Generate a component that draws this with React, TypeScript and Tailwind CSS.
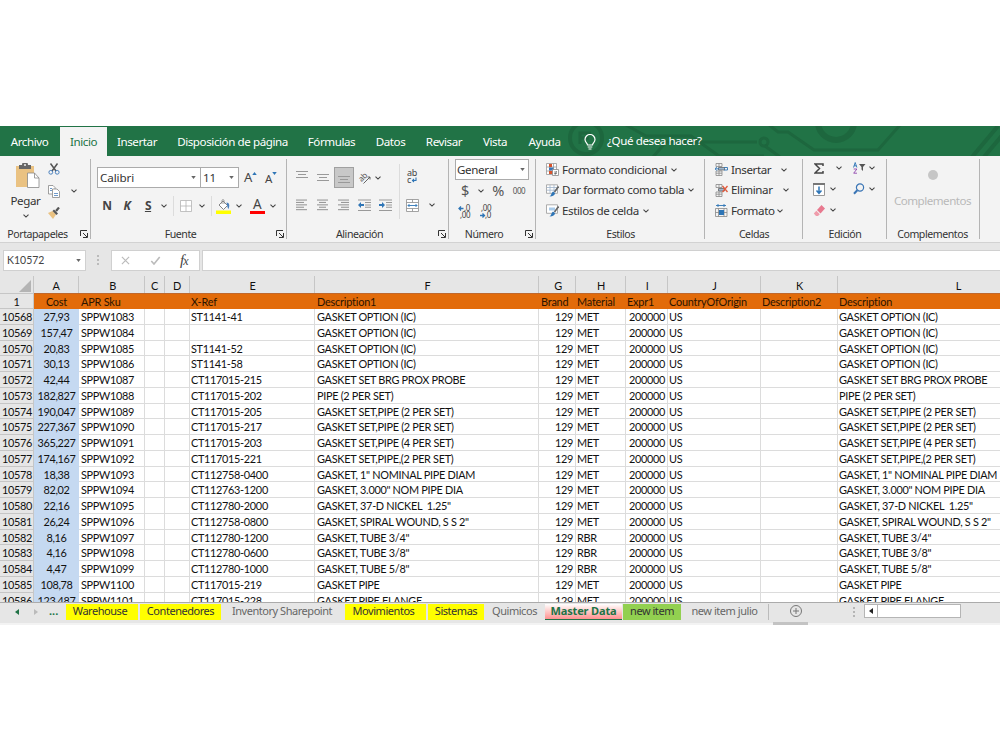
import React from 'react';
import clsx from 'clsx';

interface Row {
  id: string;
  cost: string;
  sku: string;
  xref: string;
  desc: string;
  material: string;
}

const ROWS: Row[] = [
  { id: '10568', cost: '27,93', sku: 'SPPW1083', xref: 'ST1141-41', desc: 'GASKET OPTION (IC)', material: 'MET' },
  { id: '10569', cost: '157,47', sku: 'SPPW1084', xref: '', desc: 'GASKET OPTION (IC)', material: 'MET' },
  { id: '10570', cost: '20,83', sku: 'SPPW1085', xref: 'ST1141-52', desc: 'GASKET OPTION (IC)', material: 'MET' },
  { id: '10571', cost: '30,13', sku: 'SPPW1086', xref: 'ST1141-58', desc: 'GASKET OPTION (IC)', material: 'MET' },
  { id: '10572', cost: '42,44', sku: 'SPPW1087', xref: 'CT117015-215', desc: 'GASKET SET BRG PROX PROBE', material: 'MET' },
  { id: '10573', cost: '182,827', sku: 'SPPW1088', xref: 'CT117015-202', desc: 'PIPE (2 PER SET)', material: 'MET' },
  { id: '10574', cost: '190,047', sku: 'SPPW1089', xref: 'CT117015-205', desc: 'GASKET SET,PIPE (2 PER SET)', material: 'MET' },
  { id: '10575', cost: '227,367', sku: 'SPPW1090', xref: 'CT117015-217', desc: 'GASKET SET,PIPE (2 PER SET)', material: 'MET' },
  { id: '10576', cost: '365,227', sku: 'SPPW1091', xref: 'CT117015-203', desc: 'GASKET SET,PIPE (4 PER SET)', material: 'MET' },
  { id: '10577', cost: '174,167', sku: 'SPPW1092', xref: 'CT117015-221', desc: 'GASKET SET,PIPE,(2 PER SET)', material: 'MET' },
  { id: '10578', cost: '18,38', sku: 'SPPW1093', xref: 'CT112758-0400', desc: 'GASKET, 1" NOMINAL PIPE DIAM', material: 'MET' },
  { id: '10579', cost: '82,02', sku: 'SPPW1094', xref: 'CT112763-1200', desc: 'GASKET, 3.000" NOM PIPE DIA', material: 'MET' },
  { id: '10580', cost: '22,16', sku: 'SPPW1095', xref: 'CT112780-2000', desc: 'GASKET, 37-D NICKEL  1.25"', material: 'MET' },
  { id: '10581', cost: '26,24', sku: 'SPPW1096', xref: 'CT112758-0800', desc: 'GASKET, SPIRAL WOUND, S S 2"', material: 'MET' },
  { id: '10582', cost: '8,16', sku: 'SPPW1097', xref: 'CT112780-1200', desc: 'GASKET, TUBE 3/4"', material: 'RBR' },
  { id: '10583', cost: '4,16', sku: 'SPPW1098', xref: 'CT112780-0600', desc: 'GASKET, TUBE 3/8"', material: 'RBR' },
  { id: '10584', cost: '4,47', sku: 'SPPW1099', xref: 'CT112780-1000', desc: 'GASKET, TUBE 5/8"', material: 'RBR' },
  { id: '10585', cost: '108,78', sku: 'SPPW1100', xref: 'CT117015-219', desc: 'GASKET PIPE', material: 'MET' },
  { id: '10586', cost: '123,487', sku: 'SPPW1101', xref: 'CT117015-228', desc: 'GASKET PIPE FLANGE', material: 'MET' },
];

const COLS = [
  { letter: 'A', title: 'Cost', w: 'w-[45px]' },
  { letter: 'B', title: 'APR Sku', w: 'w-[66px] pl-0.5' },
  { letter: 'C', title: '', w: 'w-[20px]' },
  { letter: 'D', title: '', w: 'w-[25px]' },
  { letter: 'E', title: 'X-Ref', w: 'w-[125px] pl-px' },
  { letter: 'F', title: 'Description1', w: 'w-[224px] pl-0.5' },
  { letter: 'G', title: 'Brand', w: 'w-[37px] pl-0.5' },
  { letter: 'H', title: 'Material', w: 'w-[50px] pl-px' },
  { letter: 'I', title: 'Expr1', w: 'w-[42px] pl-px' },
  { letter: 'J', title: 'CountryOfOrigin', w: 'w-[93px] pl-px' },
  { letter: 'K', title: 'Description2', w: 'w-[77px] pl-px' },
  { letter: 'L', title: 'Description', w: 'w-[241px] pl-px' },
];

const GRID_FONT = "font-['Lato',sans-serif] text-[10.9px] tracking-[-0.31px] whitespace-pre";

/* ---------- shared pieces ---------- */

function Chevron({ className }: { className?: string }) {
  return (
    <svg viewBox="0 0 6 4" className={clsx('h-1 w-1.5 shrink-0', className)} fill="none" stroke="#444" strokeWidth="1.1">
      <path d="M.5.7 3 3.1 5.5.7" />
    </svg>
  );
}

function Caret({ className }: { className?: string }) {
  return (
    <svg viewBox="0 0 6 4" className={clsx('h-[3px] w-[5px] shrink-0', className)} fill="#666">
      <path d="M0 0h6L3 4z" />
    </svg>
  );
}

function Slot({ className, children }: { className?: string; children: React.ReactNode }) {
  return <div className={clsx('flex h-5 w-5 shrink-0 items-center justify-center', className)}>{children}</div>;
}

function Launcher() {
  return (
    <svg viewBox="0 0 8 8" className="absolute right-[3px] bottom-1 h-2 w-2" fill="none" stroke="#333">
      <path d="M.5 6V.5H7M3 3l4 4M7.5 3v4.500H3" />
    </svg>
  );
}

function Group({ w, label, labelClass, launcher, children }: {
  w: string;
  label: string;
  labelClass?: string;
  launcher?: boolean;
  children: React.ReactNode;
}) {
  return (
    <section className={clsx('relative flex shrink-0 flex-col', w)}>
      <div className="h-[71px]">{children}</div>
      <div className={clsx('pt-px text-center text-[10.6px] leading-4 tracking-[-0.45px] whitespace-nowrap text-[#333]', labelClass)}>{label}</div>
      {launcher && <Launcher />}
      <div className="absolute top-[3px] right-0 h-[80px] w-px bg-[#b4b4b4]" />
    </section>
  );
}

/* ---------- icons ---------- */

function PasteIcon() {
  return (
    <svg viewBox="0 0 24 26" className="h-[26px] w-6">
      <path d="M0 3h18v21H0z" fill="#eac282" />
      <path d="M3 2h3a3 3 0 0 1 6 0h3v4H3z" fill="#666" />
      <circle cx="9" cy="2" r="1" fill="#eee" />
      <path d="M11.500 10h7l4.500 5v9.500H11.500z" fill="#fff" stroke="#888" strokeWidth=".8" />
      <path d="M18.500 10v5H23" fill="none" stroke="#888" strokeWidth=".8" />
    </svg>
  );
}

function CutIcon() {
  return (
    <svg viewBox="0 0 12 12" className="h-3 w-3" fill="none">
      <path d="M2.500.5 8 8M9.500.5 4 8" stroke="#555" strokeWidth="1.500" />
      <circle cx="2.800" cy="9.300" r="1.900" stroke="#4a80bd" />
      <circle cx="9.200" cy="9.300" r="1.900" stroke="#4a80bd" />
    </svg>
  );
}

function CopyIcon() {
  return (
    <svg viewBox="0 0 12 13" className="h-[13px] w-3" fill="#fff" stroke="#888" strokeWidth=".8">
      <path d="M.5.500h4.500l2 2v6.500H.5z" />
      <path d="M4.500 4h4.500l2.500 2.500v6h-7z" />
      <path d="M2 3.500h2M2 5.500h2M6 8.500h4M6 10.500h4" stroke="#4a80bd" />
    </svg>
  );
}

function BrushIcon() {
  return (
    <svg viewBox="0 0 12 12" className="h-3 w-3">
      <path d="M0 6 4.500 4l3.500 3.500L5 12z" fill="#eac282" />
      <path d="m4.500 4 1.500-1.500 4 4L8.500 8z" fill="#555" />
      <path d="m8 4 3-3.500" stroke="#555" strokeWidth="2.200" />
    </svg>
  );
}

function BordersIcon() {
  return (
    <svg viewBox="0 0 12 12" className="h-3 w-3" fill="#fff" stroke="#b4b4b4" strokeWidth=".8">
      <path d="M.5.500h11v11H.5zM6 .5v11M.5 6h11" />
    </svg>
  );
}

function BucketIcon() {
  return (
    <svg viewBox="0 0 15 15" className="h-[15px] w-[15px]" fill="none">
      <path d="m3 6 4-4 4.500 4.500-4 4z" fill="#fff" stroke="#777" strokeWidth=".9" />
      <path d="M6 5V1.500C6 .3 8 .3 8 1.500V5" stroke="#888" strokeWidth=".8" />
      <path d="M10.500 3.500c3 0 3.500 3 2 6.500-1-1-1.500-4-2-6.500z" fill="#4a80bd" />
      <path d="M0 11.500h15V15H0z" fill="#ff0" />
    </svg>
  );
}

/** Text alignment lines, each entry is [x, width] of one stroke */
function Lines({ lines }: { lines: [number, number][] }) {
  return (
    <svg viewBox="0 0 12 13" className="h-[13px] w-3" fill="#999">
      {lines.map(([x, w], i) => (
        <rect key={i} x={x} y={i * 2.4 + 0.5} width={w} height="1.1" />
      ))}
    </svg>
  );
}

function ShortLines() {
  return (
    <svg viewBox="0 0 12 7" className="h-[7px] w-3" fill="#999">
      <path d="M0 0h12v1H0zM2 3h8v1H2zM0 6h12v1H0z" />
    </svg>
  );
}

function IndentIcon({ out }: { out?: boolean }) {
  return (
    <svg viewBox="0 0 13 13" className="h-[13px] w-[13px]">
      <path d="M0 .500h13v1H0zM7 3h6v1H7zM7 5.400h6v1H7zM7 7.800h6v1H7zM0 11h13v1H0z" fill="#999" />
      <path d={out ? 'M0 6l3-3v2h3v2H3v2z' : 'M6 6 3 3v2H0v2h3v2z'} fill="#2e75b6" />
    </svg>
  );
}

function MergeIcon() {
  return (
    <svg viewBox="0 0 13 13" className="h-[13px] w-[13px]" fill="#fff" stroke="#999" strokeWidth=".9">
      <path d="M.5.500h12v12H.5zM.5 3.500h12M.5 9.500h12M6.500.500v3M6.500 9.500v3" />
      <path d="M2 6.500h9M3.500 5 2 6.500 3.500 8M9.500 5 11 6.500 9.500 8" stroke="#2e75b6" fill="none" />
    </svg>
  );
}

function ConditionalIcon() {
  return (
    <svg viewBox="0 0 13 13" className="h-[13px] w-[13px]">
      <path d="M.5.500h10v11H.5zM4 .500v11M7.500.500v11M.5 4h10M.5 8h10" fill="#fff" stroke="#999" strokeWidth=".8" />
      <path d="M3 1h3v3H3zM3 8h4v3H3z" fill="#d9532c" />
      <path d="M3 4.500h4.500v3H3z" fill="#3a75b5" />
      <path d="M6.500 6.500h6v6h-6z" fill="#fff" stroke="#888" strokeWidth=".8" />
      <path d="M8 9h3M8 10.500h3M10.500 8l-1.500 4" stroke="#555" strokeWidth=".6" />
    </svg>
  );
}

function TableStyleIcon({ cell }: { cell?: boolean }) {
  return (
    <svg viewBox="0 0 13 13" className="h-[13px] w-[13px]">
      <path d="M.5.800h11v8.500H.5z" fill="#fff" stroke="#999" strokeWidth=".8" />
      {cell ? (
        <path d="M3 3.500h6v3H3z" fill="#a9cbea" />
      ) : (
        <path d="M4 1v8M8 1v8M.5 3.500h11M.5 6.200h11" stroke="#9fb4ca" strokeWidth=".8" />
      )}
      <path d="M12.500 2.500 8.500 8" stroke="#666" strokeWidth="1.600" />
      <path d="M7 7.500 9 9c0 2-2 3.500-5.500 3.500C5.500 11.500 5 9 7 7.500z" fill="#2e75b6" />
    </svg>
  );
}

function CellsIcon({ kind }: { kind: 'insert' | 'delete' | 'format' }) {
  if (kind === 'format') {
    return (
      <svg viewBox="0 0 13 13" className="h-[13px] w-[13px]" fill="none">
        <path d="M1 1.500h10M3 0v3M9 0v3" stroke="#2e75b6" strokeWidth=".9" />
        <path d="M.5 4.500H12v8H.5zM3.500 4.500v8M9 4.500v8M.5 8.500H12" stroke="#888" strokeWidth=".8" />
        <path d="M4 6h5v5H4z" fill="#2e75b6" />
      </svg>
    );
  }
  return (
    <svg viewBox="0 0 13 13" className="h-[13px] w-[13px]" fill="none">
      <path d="M1 .500h6v3H1zM1 8h6v4.500H1zM4 .500v3M4 8v4.500M1 10.200h6" stroke="#888" strokeWidth=".8" />
      <path d="M3.500 4.500h6V7h-6z" stroke="#666" strokeWidth=".8" fill="#9db7d1" />
      {kind === 'insert' ? (
        <path d="M4 5.800H0M1.800 4 0 5.800l1.800 1.800M9 4.500h3.500V7H9" stroke="#2e75b6" strokeWidth=".9" />
      ) : (
        <path d="m7.500 2 5 6M12.500 2l-5 6" stroke="#e05a3c" strokeWidth="1.300" />
      )}
    </svg>
  );
}

function SortFilterIcon() {
  return (
    <svg viewBox="0 0 13 12" className="h-3 w-[13px]">
      <path d="m.5 5.500 1.700-5 1.700 5M1 3.800h2.400" fill="none" stroke="#2e75b6" strokeWidth=".9" />
      <path d="M.7 7h3.200L.7 11.200H4" fill="none" stroke="#8e44ad" strokeWidth=".9" />
      <path d="M6 2h6.500L10 5v4L8.500 7.500V5z" fill="#555" />
    </svg>
  );
}

function FillDownIcon() {
  return (
    <svg viewBox="0 0 12 13" className="h-[13px] w-3" fill="none">
      <path d="M.5.500h11v12H.5z" fill="#fff" stroke="#999" />
      <path d="M0 0h12v2H0z" fill="#777" />
      <path d="M6 3.500V10M3.500 7.500 6 10.300l2.500-2.800" stroke="#2e75b6" strokeWidth="1.500" />
    </svg>
  );
}

/** Circuit drawing printed on the green bar */
function Circuit() {
  return (
    <svg viewBox="0 0 440 30" className="absolute top-0 right-0 h-[30px] w-[440px]" fill="none" stroke="#1d673e" strokeWidth="3">
      <circle cx="26" cy="12" r="16" strokeWidth="4" />
      <path d="M20 18V7h11M21 12h8" strokeWidth="3" />
      <path d="M93 31 106 16h91M66-1l20 11h45l28 20h45" />
      <circle cx="204" cy="16" r="4" />
      <path d="M208-2 218 6h10l26 18h64l22-25" />
      <path d="M205 20 220 31" />
      <path d="M258-4a18 18 0 0 0 36 0" strokeWidth="6" />
      <path d="m412 31 26-31M424 31l26-31" strokeWidth="4" />
    </svg>
  );
}

/* ---------- menu bar ---------- */

const MENU = [
  { name: 'Archivo', cls: 'w-[59px]' },
  { name: 'Inicio', cls: 'w-[47px] ml-px mt-px bg-[#f3f3f3] text-[#217346] pb-px' },
  { name: 'Insertar', cls: 'w-[60px]' },
  { name: 'Disposición de página', cls: 'w-[131px]' },
  { name: 'Fórmulas', cls: 'w-[67px]' },
  { name: 'Datos', cls: 'w-[51px]' },
  { name: 'Revisar', cls: 'w-[56px]' },
  { name: 'Vista', cls: 'w-[46px]' },
  { name: 'Ayuda', cls: 'w-[53px]' },
];

function MenuBar() {
  return (
    <nav className="relative flex h-[30px] overflow-hidden bg-[#217346] text-[11.6px] tracking-[-0.42px] text-white">
      <Circuit />
      {MENU.map((m) => (
        <div key={m.name} className={clsx('relative flex shrink-0 items-center justify-center pt-0.5 whitespace-nowrap', m.cls)}>
          {m.name}
        </div>
      ))}
      <div className="relative ml-[13px] flex items-center">
        <svg viewBox="0 0 12 16" className="mt-0.5 h-4 w-3" fill="none" stroke="#fff" strokeWidth="1.200">
          <path d="M3.500 11C3.500 9 1 8.500 1 5.500a5 5 0 0 1 10 0c0 3-2.500 3.500-2.500 5.500zM3.700 13h4.600M4.500 15h3" />
        </svg>
        <span className="ml-[11px]">¿Qué desea hacer?</span>
      </div>
    </nav>
  );
}

/* ---------- ribbon ---------- */

const FIELD = 'flex h-[21px] items-center justify-between border border-[#ababab] bg-white';

function Ribbon() {
  return (
    <div className="flex h-[87px] overflow-hidden border-b border-[#d2d2d2] bg-[#f3f3f3] text-[11.6px] tracking-[-0.4px] text-[#333]">
      <Group w="w-[91px]" label="Portapapeles" labelClass="pr-4" launcher>
        <div className="flex">
          <div className="ml-2.5 flex w-[31px] flex-col items-center pt-[7px]">
            <div className="ml-1"><PasteIcon /></div>
            <span className="mt-1 leading-4">Pegar</span>
            <Chevron className="mt-[5px]" />
          </div>
          <div className="ml-[3px] flex flex-col pt-[3px]">
            <Slot><CutIcon /></Slot>
            <div className="mt-0.5 flex items-center">
              <Slot><CopyIcon /></Slot>
              <Chevron className="ml-[7px]" />
            </div>
            <Slot className="mt-0.5"><BrushIcon /></Slot>
          </div>
        </div>
      </Group>

      <Group w="w-[196px]" label="Fuente" labelClass="pr-[17px]" launcher>
        <div className="flex items-center pt-[11px]">
          <div className={clsx(FIELD, 'ml-1.5 w-[104px] pr-1 pl-0.5 tracking-[-0.1px]')}>
            Calibri
            <Caret />
          </div>
          <div className={clsx(FIELD, '-ml-px w-[39px] pr-1 pl-0.5 tracking-[-0.1px]')}>
            11
            <Caret />
          </div>
          <div className="ml-[5px] flex w-3 text-[13px] text-[#444]">
            A<Caret className="mt-1 rotate-180 fill-[#2e75b6]" />
          </div>
          <div className="ml-[9px] flex w-3 pt-0.5 text-[11.500px] text-[#444]">
            A<Caret className="mt-0.5 fill-[#2e75b6]" />
          </div>
        </div>
        <div className="mt-2 flex items-center text-[12px] font-bold text-[#444]">
          <Slot className="ml-1.5">N</Slot>
          <Slot className="italic">K</Slot>
          <Slot className="ml-px underline">S</Slot>
          <Chevron className="ml-[3px]" />
          <div className="ml-1.5 h-5 w-px bg-[#dcdcdc]" />
          <Slot className="ml-0.5"><BordersIcon /></Slot>
          <Chevron className="ml-[3px]" />
          <div className="ml-1.5 h-5 w-px bg-[#dcdcdc]" />
          <Slot className="ml-px"><BucketIcon /></Slot>
          <Chevron className="ml-[3px]" />
          <Slot className="ml-[5px]">
            <span className="flex h-[15px] w-[15px] items-end justify-center border-b-[3px] border-[#f00] text-[13.500px] leading-[13px] font-normal">A</span>
          </Slot>
          <Chevron className="ml-[3px]" />
        </div>
      </Group>

      <Group w="w-[162px]" label="Alineación" labelClass="pr-[17px]" launcher>
        <div className="flex">
          <div className="w-[112px]">
            <div className="flex items-center pt-[11px]">
              <Slot className="ml-[5px] pb-[7px]"><ShortLines /></Slot>
              <Slot className="ml-px pb-px"><ShortLines /></Slot>
              <Slot className="ml-px !h-[21px] border border-[#a0a0a0] bg-[#c8c8c8] pt-1"><ShortLines /></Slot>
              <Slot className="ml-px">
                <svg viewBox="0 0 13 12" className="h-3 w-[13px] overflow-visible" fill="none" stroke="#555">
                  <text x="0" y="8" transform="rotate(-45 4 6)" fontSize="8" fill="#555" stroke="none">ab</text>
                  <path d="m4.500 11.500 6.500-6.500M8.500 5H11v2.500" strokeWidth=".9" />
                </svg>
              </Slot>
              <Chevron />
            </div>
            <div className="mt-[7px] flex items-center">
              <Slot className="ml-[5px]"><Lines lines={[[0, 11], [0, 8], [0, 11], [0, 8], [0, 11]]} /></Slot>
              <Slot className="ml-px"><Lines lines={[[0, 11], [2, 7], [0, 11], [2, 7], [0, 11]]} /></Slot>
              <Slot className="ml-px"><Lines lines={[[0, 11], [3, 8], [0, 11], [3, 8], [0, 11]]} /></Slot>
              <Slot><IndentIcon out /></Slot>
              <Slot className="ml-px"><IndentIcon /></Slot>
            </div>
          </div>
          <div className="mt-2 h-[55px] w-px bg-[#dcdcdc]" />
          <div className="pt-[11px]">
            <Slot className="ml-0.5">
              <svg viewBox="0 0 12 14" className="h-3.5 w-3 overflow-visible" fill="#444">
                <text x="1" y="6" fontSize="9">ab</text>
                <text x="1" y="13" fontSize="9">c</text>
                <path d="M10 7.500v3H6.500M8 9l-1.500 1.500L8 12" fill="none" stroke="#2e75b6" strokeWidth="1.100" />
              </svg>
            </Slot>
            <div className="mt-2 flex items-center">
              <Slot className="ml-0.5"><MergeIcon /></Slot>
              <Chevron className="ml-[7px]" />
            </div>
          </div>
        </div>
      </Group>

      <Group w="w-[87px]" label="Número" labelClass="pr-[17px]" launcher>
        <div className="pt-[3px] pl-1.5">
          <div className={clsx(FIELD, 'w-[74px] pr-[3px] pl-px tracking-[-0.35px]')}>
            General
            <Caret />
          </div>
        </div>
        <div className="mt-px flex items-center text-[14.500px] text-[#555]">
          <Slot className="ml-1.5">$</Slot>
          <Chevron className="ml-[3px]" />
          <Slot className="ml-1">%</Slot>
          <Slot className="ml-px text-[8px]">000</Slot>
        </div>
        <div className="mt-px flex items-center">
          <Slot className="ml-1.5">
            <svg viewBox="0 0 14 14" className="h-3.5 w-3.5 overflow-visible" fill="#444" fontSize="8">
              <text x="6" y="6">,0</text>
              <text x="2" y="13">,00</text>
              <path d="M5.500 3.500H1M3 1.500l-2 2 2 2" fill="none" stroke="#2e75b6" strokeWidth="1.300" />
            </svg>
          </Slot>
          <Slot className="ml-px">
            <svg viewBox="0 0 14 14" className="h-3.5 w-3.5 overflow-visible" fill="#444" fontSize="8">
              <text x="2" y="6">,00</text>
              <text x="6" y="13">,0</text>
              <path d="M1 10.500h4.500M3.500 8.500l2 2-2 2" fill="none" stroke="#2e75b6" strokeWidth="1.300" />
            </svg>
          </Slot>
        </div>
      </Group>

      <Group w="w-[169px]" label="Estilos">
        <div className="flex flex-col pt-[3px] pl-[10px]">
          <div className="flex h-[21px] items-center whitespace-nowrap">
            <ConditionalIcon />
            <span className="ml-[3px] tracking-[-0.35px]">Formato condicional</span>
            <Chevron className="ml-1" />
          </div>
          <div className="flex h-5 items-center whitespace-nowrap">
            <TableStyleIcon />
            <span className="ml-[3px]">Dar formato como tabla</span>
            <Chevron className="ml-1" />
          </div>
          <div className="flex h-[21px] items-center whitespace-nowrap">
            <TableStyleIcon cell />
            <span className="ml-[3px]">Estilos de celda</span>
            <Chevron className="ml-1" />
          </div>
        </div>
      </Group>

      <Group w="w-[98px]" label="Celdas">
        <div className="flex flex-col pt-[3px] pl-2.5">
          <div className="flex h-[21px] items-center">
            <CellsIcon kind="insert" />
            <span className="ml-[3px] w-[50px]">Insertar</span>
            <Chevron />
          </div>
          <div className="flex h-5 items-center">
            <CellsIcon kind="delete" />
            <span className="ml-[3px] w-[52px]">Eliminar</span>
            <Chevron />
          </div>
          <div className="flex h-[21px] items-center">
            <CellsIcon kind="format" />
            <span className="ml-[3px] w-[46px]">Formato</span>
            <Chevron />
          </div>
        </div>
      </Group>

      <Group w="w-[84px]" label="Edición">
        <div className="flex items-center pt-[2px]">
          <Slot className="ml-[6px]">
            <svg viewBox="0 0 10 11" className="h-[11px] w-2.5" fill="none" stroke="#444" strokeWidth="1.500">
              <path d="M9 3V1H1l4.500 4.500L1 10h8V8" />
            </svg>
          </Slot>
          <Chevron className="ml-[7px]" />
          <Slot className="ml-[7px]"><SortFilterIcon /></Slot>
          <Chevron />
        </div>
        <div className="mt-px flex items-center">
          <Slot className="ml-[6px]"><FillDownIcon /></Slot>
          <Chevron className="ml-px" />
          <Slot className="ml-[13px]">
            <svg viewBox="0 0 12 12" className="h-3 w-3" fill="none" stroke="#3a75b5">
              <circle cx="7" cy="4.500" r="3.600" strokeWidth="1.200" />
              <path d="M4.300 7.200 1 10.800" strokeWidth="2" />
            </svg>
          </Slot>
          <Chevron />
        </div>
        <div className="mt-px flex items-center">
          <Slot className="ml-[6px]">
            <svg viewBox="0 0 12 11" className="h-[11px] w-3">
              <path d="m4 5 4.500-5L12 3.500 7.500 8.500z" fill="#e8798f" />
              <path d="m3.300 5.700 3.500 3.500L5 11H3L.8 8.500z" fill="#ef9cab" />
            </svg>
          </Slot>
          <Chevron className="ml-px" />
        </div>
      </Group>

      <Group w="w-[93px]" label="Complementos" labelClass="pr-0.5">
        <div className="flex flex-col items-center pt-3.5 pr-[2px] text-[#b9b9b9]">
          <div className="h-2.5 w-2.5 rounded-full bg-[#c6c6c6]" />
          <span className="mt-[13px] leading-4 tracking-[-0.5px]">Complementos</span>
        </div>
      </Group>
    </div>
  );
}

/* ---------- formula bar ---------- */

function FormulaBar() {
  return (
    <div className="flex h-[33px] shrink-0 items-start bg-[#e6e6e6] pt-[7px]">
      <div className="ml-[3px] flex h-[21px] w-[83px] items-center justify-between border border-[#d0d0d0] bg-white pr-1 pl-[3px] font-['Lato',sans-serif] text-[10.500px] text-[#444]">
        K10572
        <Caret />
      </div>
      <div className="ml-[11px] flex h-5 flex-col justify-center gap-0.5">
        <i className="h-0.5 w-0.5 bg-[#bbb]" />
        <i className="h-0.5 w-0.5 bg-[#bbb]" />
        <i className="h-0.5 w-0.5 bg-[#bbb]" />
      </div>
      <div className="ml-3 flex h-[21px] w-[89px] items-center border border-[#d0d0d0] bg-white">
        <svg viewBox="0 0 10 10" className="ml-[9px] h-[9px] w-[9px]" stroke="#bbb" strokeWidth="1.300">
          <path d="m1 1 8 8M9 1 1 9" />
        </svg>
        <svg viewBox="0 0 10 9" className="ml-5 h-[9px] w-[11px]" fill="none" stroke="#bbb" strokeWidth="1.600">
          <path d="m.8 5 2.700 3L9.200 1" />
        </svg>
        <span className="ml-[19px] font-['Liberation_Serif',serif] text-[15px] leading-4 text-[#444] italic">
          f<span className="-ml-px text-[12px]">x</span>
        </span>
      </div>
      <div className="ml-0.5 h-[21px] flex-1 border border-r-0 border-[#d0d0d0] bg-white" />
    </div>
  );
}

/* ---------- grid ---------- */

function Cell({ w, children, className }: { w: string; children?: React.ReactNode; className?: string }) {
  return (
    <div className={clsx('shrink-0 overflow-hidden border-r border-b border-[#dcdcdc]', w, className)}>{children}</div>
  );
}

function Sheet() {
  return (
    <div className={clsx('h-[326px] overflow-hidden bg-white text-[#111]', GRID_FONT)}>
      <div className="flex h-[17px] w-[1100px] bg-[#e6e6e6] leading-[20px]">
        <div className="flex w-[34px] shrink-0 items-end justify-end border-r border-[#c6c6c6] pr-0.5 pb-px">
          <svg viewBox="0 0 12 12" className="h-3 w-3" fill="#b4b4b4">
            <path d="M12 0v12H0z" />
          </svg>
        </div>
        {COLS.map((c) => (
          <div key={c.letter} className={clsx('shrink-0 border-r border-[#c6c6c6] text-center', c.w)}>
            {c.letter}
          </div>
        ))}
      </div>
      <div className="flex h-4 w-[1100px] border-t border-[#c0682c] bg-[#e26b0a] leading-[15px]">
        <div className="-mt-px w-[34px] shrink-0 border-t border-r border-b border-[#c6c6c6] bg-[#e6e6e6] text-center">1</div>
        {COLS.map((c) => (
          <div key={c.letter} className={clsx('shrink-0 tracking-[-0.2px] text-[#2b1400]', c.w, c.letter === 'A' && 'text-center')}>
            {c.title}
          </div>
        ))}
      </div>
      {ROWS.map((r) => (
        <div key={r.id} className="flex h-[15.760px] w-[1100px] leading-4">
          <div className="w-[34px] shrink-0 border-r border-b border-[#c6c6c6] bg-[#e6e6e6] pl-0.5">{r.id}</div>
          <div className="w-[45px] shrink-0 bg-[#c5d9f1] text-center">{r.cost}</div>
          <Cell w="w-[66px]" className="pl-0.5">{r.sku}</Cell>
          <Cell w="w-[20px]" />
          <Cell w="w-[25px]" />
          <Cell w="w-[125px]" className="pl-px">{r.xref}</Cell>
          <Cell w="w-[224px]" className="pl-0.5">{r.desc}</Cell>
          <Cell w="w-[37px]" className="pr-0.5 text-right">129</Cell>
          <Cell w="w-[50px]" className="pl-px">{r.material}</Cell>
          <Cell w="w-[42px]" className="pr-0.5 text-right">200000</Cell>
          <Cell w="w-[93px]" className="pl-px">US</Cell>
          <Cell w="w-[77px]" />
          <Cell w="w-[241px]" className="pl-px">{r.desc}</Cell>
        </div>
      ))}
    </div>
  );
}

/* ---------- sheet tabs ---------- */

const TABS = [
  { name: 'Warehouse', cls: 'w-[72px] ml-[5px] pr-1 bg-[#ff0] text-[#333]' },
  { name: 'Contenedores', cls: 'w-[81px] ml-0.5 bg-[#ff0] text-[#333]' },
  { name: 'Inventory Sharepoint', cls: 'w-[122px] text-[#666]' },
  { name: 'Movimientos', cls: 'w-[81px] ml-0.5 pr-1 bg-[#ff0] text-[#333]' },
  { name: 'Sistemas', cls: 'w-[56px] ml-0.5 bg-[#ff0] text-[#333]' },
  { name: 'Quimicos', cls: 'w-[61px] text-[#666]' },
  { name: 'Master Data', cls: 'w-[77px] border-b border-[#217346] bg-linear-to-b from-white to-[#ff9090] font-bold text-[#217346] tracking-[-0.15px]' },
  { name: 'new item', cls: 'w-[58px] ml-px bg-[#92d050] text-[#333]' },
  { name: 'new item julio', cls: 'w-[88px] border-r border-[#bbb] text-[#666]' },
];

function SheetTabs() {
  return (
    <div className="relative flex h-[23px] border-t border-[#ababab] bg-[#e6e6e6] text-[11px] tracking-[-0.46px]">
      <svg viewBox="0 0 4 6" className="mt-1.5 ml-[15px] h-1.5 w-1 shrink-0" fill="#217346"><path d="M4 0v6L0 3z" /></svg>
      <svg viewBox="0 0 4 6" className="mt-1.5 ml-[15px] h-1.5 w-1 shrink-0" fill="#bbb"><path d="M0 0v6l4-3z" /></svg>
      <span className="ml-[11px] w-3 leading-4 font-bold tracking-normal text-[#217346]">...</span>
      {TABS.map((t) => (
        <div key={t.name} className={clsx('mt-px h-4 shrink-0 text-center leading-[14px] whitespace-nowrap', t.cls)}>
          {t.name}
        </div>
      ))}
      <svg viewBox="0 0 12 12" className="mt-0.5 ml-[21px] h-3 w-3 shrink-0" fill="none" stroke="#777">
        <circle cx="6" cy="6" r="5.500" />
        <path d="M6 3v6M3 6h6" />
      </svg>
      <div className="mt-1 ml-[51px] flex flex-col gap-0.5">
        <i className="h-0.5 w-0.5 bg-[#b5b5b5]" />
        <i className="h-0.5 w-0.5 bg-[#b5b5b5]" />
        <i className="h-0.5 w-0.5 bg-[#b5b5b5]" />
      </div>
      <div className="mt-px ml-[9px] flex h-3.5 w-[97px] border border-[#b5b5b5] bg-white">
        <div className="flex w-[13px] items-center justify-center border-r border-[#b5b5b5]">
          <svg viewBox="0 0 4 6" className="h-1.5 w-1" fill="#222"><path d="M4 0v6L0 3z" /></svg>
        </div>
      </div>
      <div className="absolute bottom-0 left-[773px] h-[3px] w-[35px] bg-[#c3c3c3]" />
      <div className="absolute bottom-0 left-0 h-0.5 w-[773px] bg-[#f3f3f3]" />
      <div className="absolute right-0 bottom-0 left-[808px] h-0.5 bg-[#f3f3f3]" />
    </div>
  );
}

export default function App() {
  return (
    <div className="h-[750px] w-[1000px] overflow-hidden bg-white pt-[126px] font-['Noto_Sans','Open_Sans',sans-serif]">
      <MenuBar />
      <Ribbon />
      <FormulaBar />
      <Sheet />
      <SheetTabs />
    </div>
  );
}
